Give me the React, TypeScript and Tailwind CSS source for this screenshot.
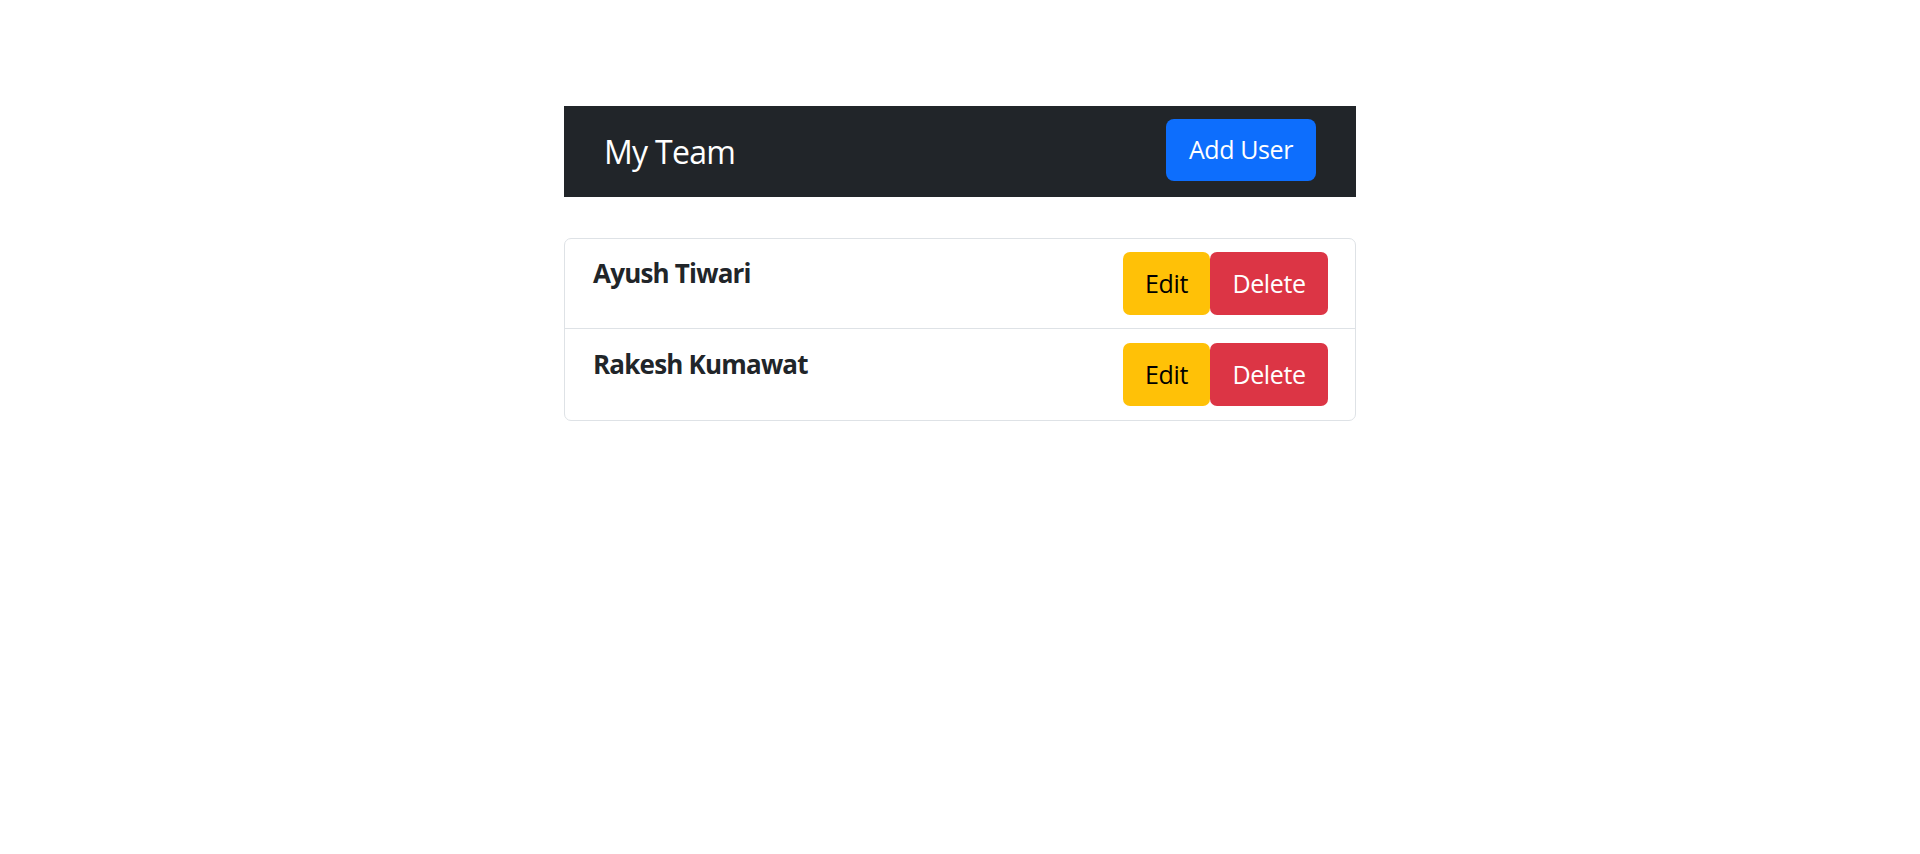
const users = [
  { id: 1, name: "Ayush Tiwari" },
  { id: 2, name: "Rakesh Kumawat" },
];

export default function App() {
  return (
    <div className="min-h-screen bg-white pt-[106px] font-['Open_Sans',sans-serif] text-[#212529]">
      <div className="mx-auto w-[792px]">
        {/* Header */}
        <header className="flex h-[91px] justify-between bg-[#212529] px-10">
          <span className="self-center text-[32px] leading-none tracking-[-0.7px] text-white">My Team</span>
          <button className="mt-[13px] h-[62px] w-[150px] rounded-[8px] bg-[#0d6efd] text-[25px] tracking-[-0.4px] text-white">
            Add User
          </button>
        </header>

        {/* User list */}
        <ul className="mt-[41px] rounded-[7px] border border-[#dee2e6]">
          {users.map((user, i) => (
            <li
              key={user.id}
              className={
                i > 0
                  ? "flex justify-between border-t border-[#dee2e6] py-[14px] pl-[28px] pr-[27px]"
                  : "flex justify-between py-[13px] pl-[28px] pr-[27px]"
              }
            >
              <span className="pt-[2px] text-[26px] leading-[38px] font-bold tracking-[-0.8px]">{user.name}</span>
              <div className="flex">
                <button className="h-[63px] w-[87px] rounded-[7px] bg-[#ffc107] text-[25px] tracking-[-0.4px] text-black">
                  Edit
                </button>
                <button className="h-[63px] w-[118px] rounded-[7px] bg-[#dc3545] text-[25px] tracking-[-0.4px] text-white">
                  Delete
                </button>
              </div>
            </li>
          ))}
        </ul>
      </div>
    </div>
  );
}
